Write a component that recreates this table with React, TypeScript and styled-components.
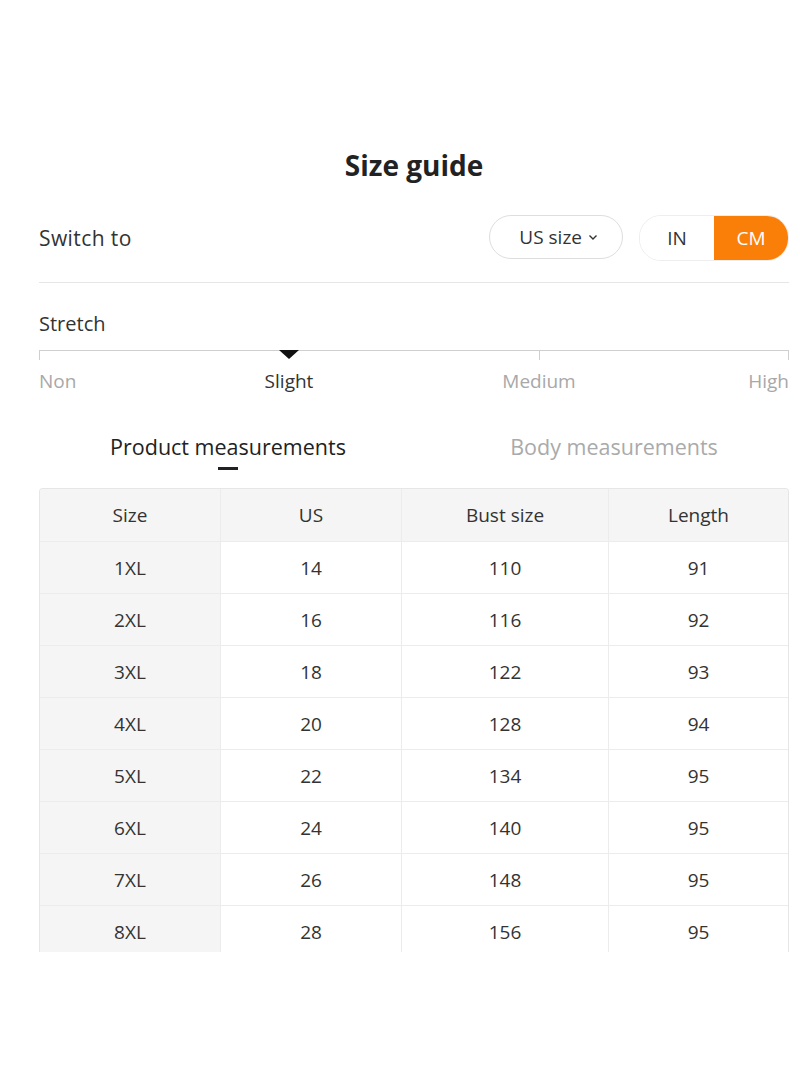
import React, { useState } from 'react';
import styled, { createGlobalStyle } from 'styled-components';

const ROWS = [
  ['1XL', '14', '110', '91'],
  ['2XL', '16', '116', '92'],
  ['3XL', '18', '122', '93'],
  ['4XL', '20', '128', '94'],
  ['5XL', '22', '134', '95'],
  ['6XL', '24', '140', '95'],
  ['7XL', '26', '148', '95'],
  ['8XL', '28', '156', '95'],
];

const STRETCH = ['Non', 'Slight', 'Medium', 'High'];
const COL_WIDTHS = [180, 180, 206];

const GlobalStyle = createGlobalStyle`
  body {
    margin: 0;
    background: #fff;
    font-family: 'Open Sans', 'Noto Sans', sans-serif;
    color: #222;
  }
`;

export default function App() {
  const [unit, setUnit] = useState('CM');
  const [tab, setTab] = useState(0);

  return (
    <Page>
      <GlobalStyle />
      <Title>Size guide</Title>

      <SwitchRow>
        <Label wide>Switch to</Label>
        <Controls>
          <Pill>
            US size
            <svg width="12" height="12" viewBox="0 0 12 12">
              <path d="M2.5 4.5 L6 8 L9.5 4.5" fill="none" stroke="#333" strokeWidth="1.4" />
            </svg>
          </Pill>
          <Toggle>
            {['IN', 'CM'].map((u) => (
              <ToggleItem key={u} active={unit === u} onClick={() => setUnit(u)}>
                {u}
              </ToggleItem>
            ))}
          </Toggle>
        </Controls>
      </SwitchRow>

      <StretchBlock>
        <Label>Stretch</Label>
        <Track>
          <Segment />
          <Segment last />
          <Marker />
        </Track>
        <ScaleLabels>
          {STRETCH.map((s, i) => (
            <ScaleLabel key={s} active={i === 1}>
              {s}
            </ScaleLabel>
          ))}
        </ScaleLabels>
      </StretchBlock>

      <Tabs>
        {['Product measurements', 'Body measurements'].map((t, i) => (
          <TabItem key={t} active={tab === i} onClick={() => setTab(i)}>
            {t}
          </TabItem>
        ))}
      </Tabs>

      <TableWrap>
        <Table>
          <thead>
            <tr>
              {['Size', 'US', 'Bust size', 'Length'].map((h, i) => (
                <Th key={h} style={COL_WIDTHS[i] ? { width: COL_WIDTHS[i] } : undefined}>
                  {h}
                </Th>
              ))}
            </tr>
          </thead>
          <tbody>
            {ROWS.map((r) => (
              <tr key={r[0]}>
                {r.map((c, i) => (
                  <Td key={i} first={i === 0}>
                    {c}
                  </Td>
                ))}
              </tr>
            ))}
          </tbody>
        </Table>
      </TableWrap>
    </Page>
  );
}

const Page = styled.div`
  width: 750px;
  padding: 146px 11px 0 39px;
`;

const Title = styled.h1`
  margin: 0;
  text-align: center;
  font-size: 28px;
  font-weight: 700;
  line-height: 38px;
  color: #222;
`;

const SwitchRow = styled.div`
  display: flex;
  align-items: center;
  justify-content: space-between;
  margin-top: 31px;
  padding-bottom: 21px;
  border-bottom: 1px solid #e6e6e6;
`;

const Label = styled.div<{ wide?: boolean }>`
  font-size: ${(p) => (p.wide ? '21px' : '20px')};
  letter-spacing: ${(p) => (p.wide ? '0.4px' : '0')};
  line-height: 28px;
  color: #333;
`;

const Controls = styled.div`
  display: flex;
  gap: 16px;
`;

const Pill = styled.div`
  display: flex;
  align-items: center;
  gap: 5px;
  height: 44px;
  box-sizing: border-box;
  padding: 0 23px 0 29px;
  border: 1px solid #dedede;
  border-radius: 22px;
  font-size: 19px;
  color: #333;
`;

const Toggle = styled.div`
  display: flex;
  height: 44px;
  border: 1px solid #eee;
  border-radius: 22px;
  overflow: hidden;
`;

const ToggleItem = styled.div<{ active: boolean }>`
  width: 74px;
  display: flex;
  align-items: center;
  justify-content: center;
  font-size: 19px;
  cursor: pointer;
  background: ${(p) => (p.active ? '#fa7f08' : '#fff')};
  color: ${(p) => (p.active ? '#fff' : '#333')};
`;

const StretchBlock = styled.div`
  margin-top: 27px;
`;

const Track = styled.div`
  position: relative;
  display: grid;
  grid-template-columns: 500px 1fr;
  margin-top: 12px;
  height: 10px;
`;

const Segment = styled.div<{ last?: boolean }>`
  border-top: 1px solid #cfcfcf;
  border-left: 1px solid #cfcfcf;
  border-right: ${(p) => (p.last ? '1px solid #cfcfcf' : 'none')};
`;

const Marker = styled.div`
  position: absolute;
  left: 250px;
  top: 0;
  transform: translateX(-50%);
  width: 0;
  height: 0;
  border-left: 10px solid transparent;
  border-right: 10px solid transparent;
  border-top: 9px solid #111;
`;

const ScaleLabels = styled.div`
  position: relative;
  margin-top: 9px;
  height: 24px;
`;

const ScaleLabel = styled.div<{ active: boolean }>`
  position: absolute;
  top: 0;
  font-size: 19px;
  line-height: 24px;
  color: ${(p) => (p.active ? '#333' : '#a8a8a8')};
  white-space: nowrap;
  &:nth-child(1) {
    left: 0;
  }
  &:nth-child(2) {
    left: 250px;
    transform: translateX(-50%);
  }
  &:nth-child(3) {
    left: 500px;
    transform: translateX(-50%);
  }
  &:nth-child(4) {
    right: 0;
  }
`;

const Tabs = styled.div`
  display: grid;
  grid-template-columns: 378px 1fr;
  margin-top: 40px;
`;

const TabItem = styled.div<{ active: boolean }>`
  text-align: center;
  font-size: 21.5px;
  line-height: 28px;
  cursor: pointer;
  color: ${(p) => (p.active ? '#222' : '#aaa')};
  &:nth-child(2) {
    padding-left: 22px;
  }
  &:after {
    content: '';
    display: block;
    width: 20px;
    height: 3px;
    margin: 6px auto 0;
    background: ${(p) => (p.active ? '#222' : 'transparent')};
  }
`;

const TableWrap = styled.div`
  margin-top: 18px;
  height: 463px;
  overflow: hidden;
  border: 1px solid #e6e6e6;
  border-bottom: none;
  border-radius: 4px 4px 0 0;
`;

const Table = styled.table`
  width: 100%;
  border-collapse: collapse;
  table-layout: fixed;
  font-size: 19px;
  color: #333;
  tr > * {
    border-left: 1px solid #ececec;
  }
  tr > *:first-child {
    border-left: none;
  }
`;

const Th = styled.th`
  height: 52px;
  font-weight: 400;
  background: #f5f5f5;
  text-align: center;
  padding: 0;
`;

const Td = styled.td<{ first: boolean }>`
  height: 51px;
  padding: 0;
  text-align: center;
  border-top: 1px solid #ececec;
  background: ${(p) => (p.first ? '#f5f5f5' : '#fff')};
`;
